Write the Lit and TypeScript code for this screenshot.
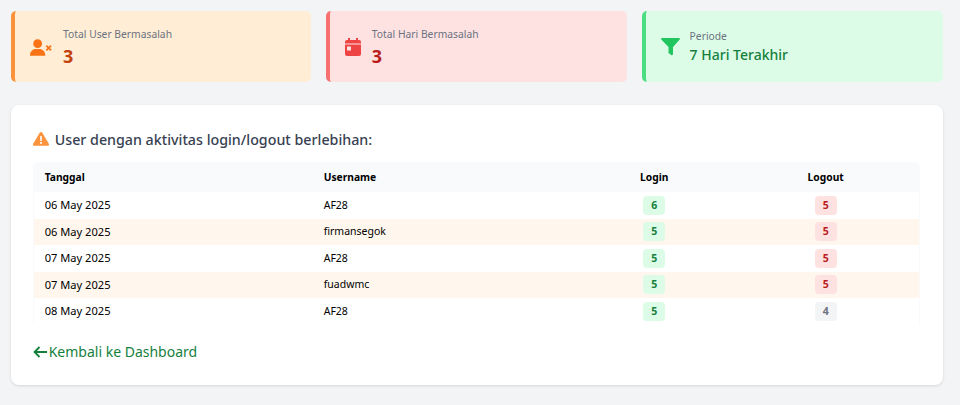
import { LitElement, html, css, svg } from "lit";
import { customElement } from "lit/decorators.js";

const rows = [
  ["06 May 2025", "AF28", 6, 5],
  ["06 May 2025", "firmansegok", 5, 5],
  ["07 May 2025", "AF28", 5, 5],
  ["07 May 2025", "fuadwmc", 5, 5],
  ["08 May 2025", "AF28", 5, 4],
] as const;

@customElement("app-root")
export class AppRoot extends LitElement {
  static styles = css`
    :host { display: block; height: 405px; box-sizing: border-box; padding: 11px 17px 20px 10.7px; background: #f3f4f6; font-family: "Noto Sans", "Open Sans", sans-serif; overflow: hidden; }
    .stats { display: grid; grid-template-columns: repeat(3, 1fr); gap: 15px; margin-bottom: 23px; }
    .stat { height: 71px; box-sizing: border-box; border-left: 4px solid; border-radius: 5px; display: flex; align-items: center; padding-left: 14.4px; gap: 10px; }
    .stat svg { display: block; flex: none; }
    .stat svg.cal { margin-right: 1px; }
    .orange { background: #ffedd5; border-color: #fb923c; }
    .red { background: #fee2e2; border-color: #f87171; }
    .green { background: #dcfce7; border-color: #4ade80; }
    .text { margin-top: 2px; }
    .label { font-size: 10.3px; line-height: 14px; color: #6b7280; }
    .value { font-size: 18px; line-height: 24px; font-weight: 700; margin-top: 3px; }
    .orange .value { color: #c2410c; }
    .red .value { color: #b91c1c; }
    .green .text { margin-top: 0; }
    .green .value { color: #15803d; font-size: 14px; line-height: 20px; font-weight: 500; margin-top: 2px; }
    .panel { background: #fff; border-radius: 8px; box-shadow: 0 1px 3px rgba(0,0,0,.12); height: 280px; box-sizing: border-box; padding: 22px; }
    h2 { margin: 0 0 11px; height: 24px; display: flex; align-items: center; gap: 6px; font-size: 14.25px; font-weight: 500; color: #374151; }
    .wrap { width: 887px; box-sizing: border-box; border: 1px solid #f9fafb; border-bottom: none; border-radius: 5px 5px 0 0; overflow: hidden; }
    table { width: 885px; border-collapse: collapse; table-layout: fixed; font-size: 10.5px; color: #000; }
    th, td { box-sizing: border-box; padding: 0 11px; }
    th { background: #f9fafb; height: 29px; padding-bottom: 2px; font-weight: 700; text-align: left; font-size: 10.25px; }
    td { height: 26.5px; padding-bottom: .6px; }
    td.date { padding-bottom: 1.5px; font-size: 11.1px; }
    td:nth-child(2), th:nth-child(2) { padding-left: 12px; }
    td:nth-child(3), th:nth-child(3) { padding-left: 12px; }
    td:nth-child(4), th:nth-child(4) { padding-left: 14px; }
    tbody tr:nth-child(even) td { background: #fff7ed; }
    .c1 { width: 278px; } .c2 { width: 266px; } .c3 { width: 152px; } .c4 { width: 189px; }
    th.center, td.center { text-align: center; }
    td.center { padding-bottom: 0; }
    .badge { display: inline-block; width: 22px; height: 19px; line-height: 19px; border-radius: 4px; font-weight: 700; font-size: 10.5px; text-align: center; vertical-align: middle; }
    .g { background: #dcfce7; color: #15803d; }
    .r { background: #fee2e2; color: #b91c1c; }
    .n { background: #f3f4f6; color: #6b7280; }
    .back { display: inline-flex; align-items: center; gap: 2px; margin-top: 17px; font-size: 14px; line-height: 20px; color: #15803d; text-decoration: none; }
  `;

  private stat(cls: string, icon: unknown, label: string, value: string) {
    return html`<div class="stat ${cls}">${icon}<div class="text"><div class="label">${label}</div><div class="value">${value}</div></div></div>`;
  }

  render() {
    const user = svg`<svg width="24" height="20" viewBox="0 0 25 20" fill="#f97316"><circle cx="9" cy="6.5" r="4.6"/><path d="M1 19c0-4.500 3-7 6-7h4c3 0 6 2.500 6 7z"/><path d="M18 8.500l5 5m0-5l-5 5" stroke="#f97316" stroke-width="1.800" fill="none"/></svg>`;
    const cal = svg`<svg class="cal" width="16" height="19" viewBox="0 0 16 19" fill="#ef4444"><path d="M3 1h2v2h6V1h2v2h1a2 2 0 0 1 2 2v1.500H0V5a2 2 0 0 1 2-2h1z"/><path d="M0 7.500h16V17a2 2 0 0 1-2 2H2a2 2 0 0 1-2-2zM2 9.500v4h4v-4z" fill-rule="evenodd"/></svg>`;
    const funnel = svg`<svg width="19" height="18" viewBox="0 0 19 18" fill="#22c55e"><path d="M1 0h17c.8 0 1.200 1 .7 1.600L12 9v7c0 1-1 1.500-1.800 1L7.500 15V9L.3 1.600C-.2 1 .2 0 1 0z"/></svg>`;
    return html`
      <div class="stats">
        ${this.stat("orange", user, "Total User Bermasalah", "3")}
        ${this.stat("red", cal, "Total Hari Bermasalah", "3")}
        ${this.stat("green", funnel, "Periode", "7 Hari Terakhir")}
      </div>
      <div class="panel">
        <h2><svg width="16" height="14" viewBox="0 0 16 14"><path fill="#fb923c" d="M8 0c.6 0 1 .3 1.300.8l6.500 11c.5.9-.1 2-1.200 2H1.400c-1.100 0-1.700-1.100-1.200-2L6.700.8C7 .3 7.400 0 8 0z"/><path fill="#fff" d="M7.200 4h1.600v5H7.200zM7.100 10h1.800v1.800H7.100z"/></svg>User dengan aktivitas login/logout berlebihan:</h2>
        <div class="wrap">
          <table>
            <thead><tr><th class="c1">Tanggal</th><th class="c2">Username</th><th class="c3 center">Login</th><th class="c4 center">Logout</th></tr></thead>
            <tbody>
              ${rows.map((r) => html`<tr><td class="date">${r[0]}</td><td>${r[1]}</td><td class="center"><span class="badge g">${r[2]}</span></td><td class="center"><span class="badge ${r[3] === 5 ? "r" : "n"}">${r[3]}</span></td></tr>`)}
            </tbody>
          </table>
        </div>
        <a class="back" href="#"><svg width="14" height="12" viewBox="0 0 14 12" fill="none" stroke="#15803d" stroke-width="1.800"><path d="M14 6H2M6.500 1L1.500 6l5 5"/></svg>Kembali ke Dashboard</a>
      </div>
    `;
  }
}
